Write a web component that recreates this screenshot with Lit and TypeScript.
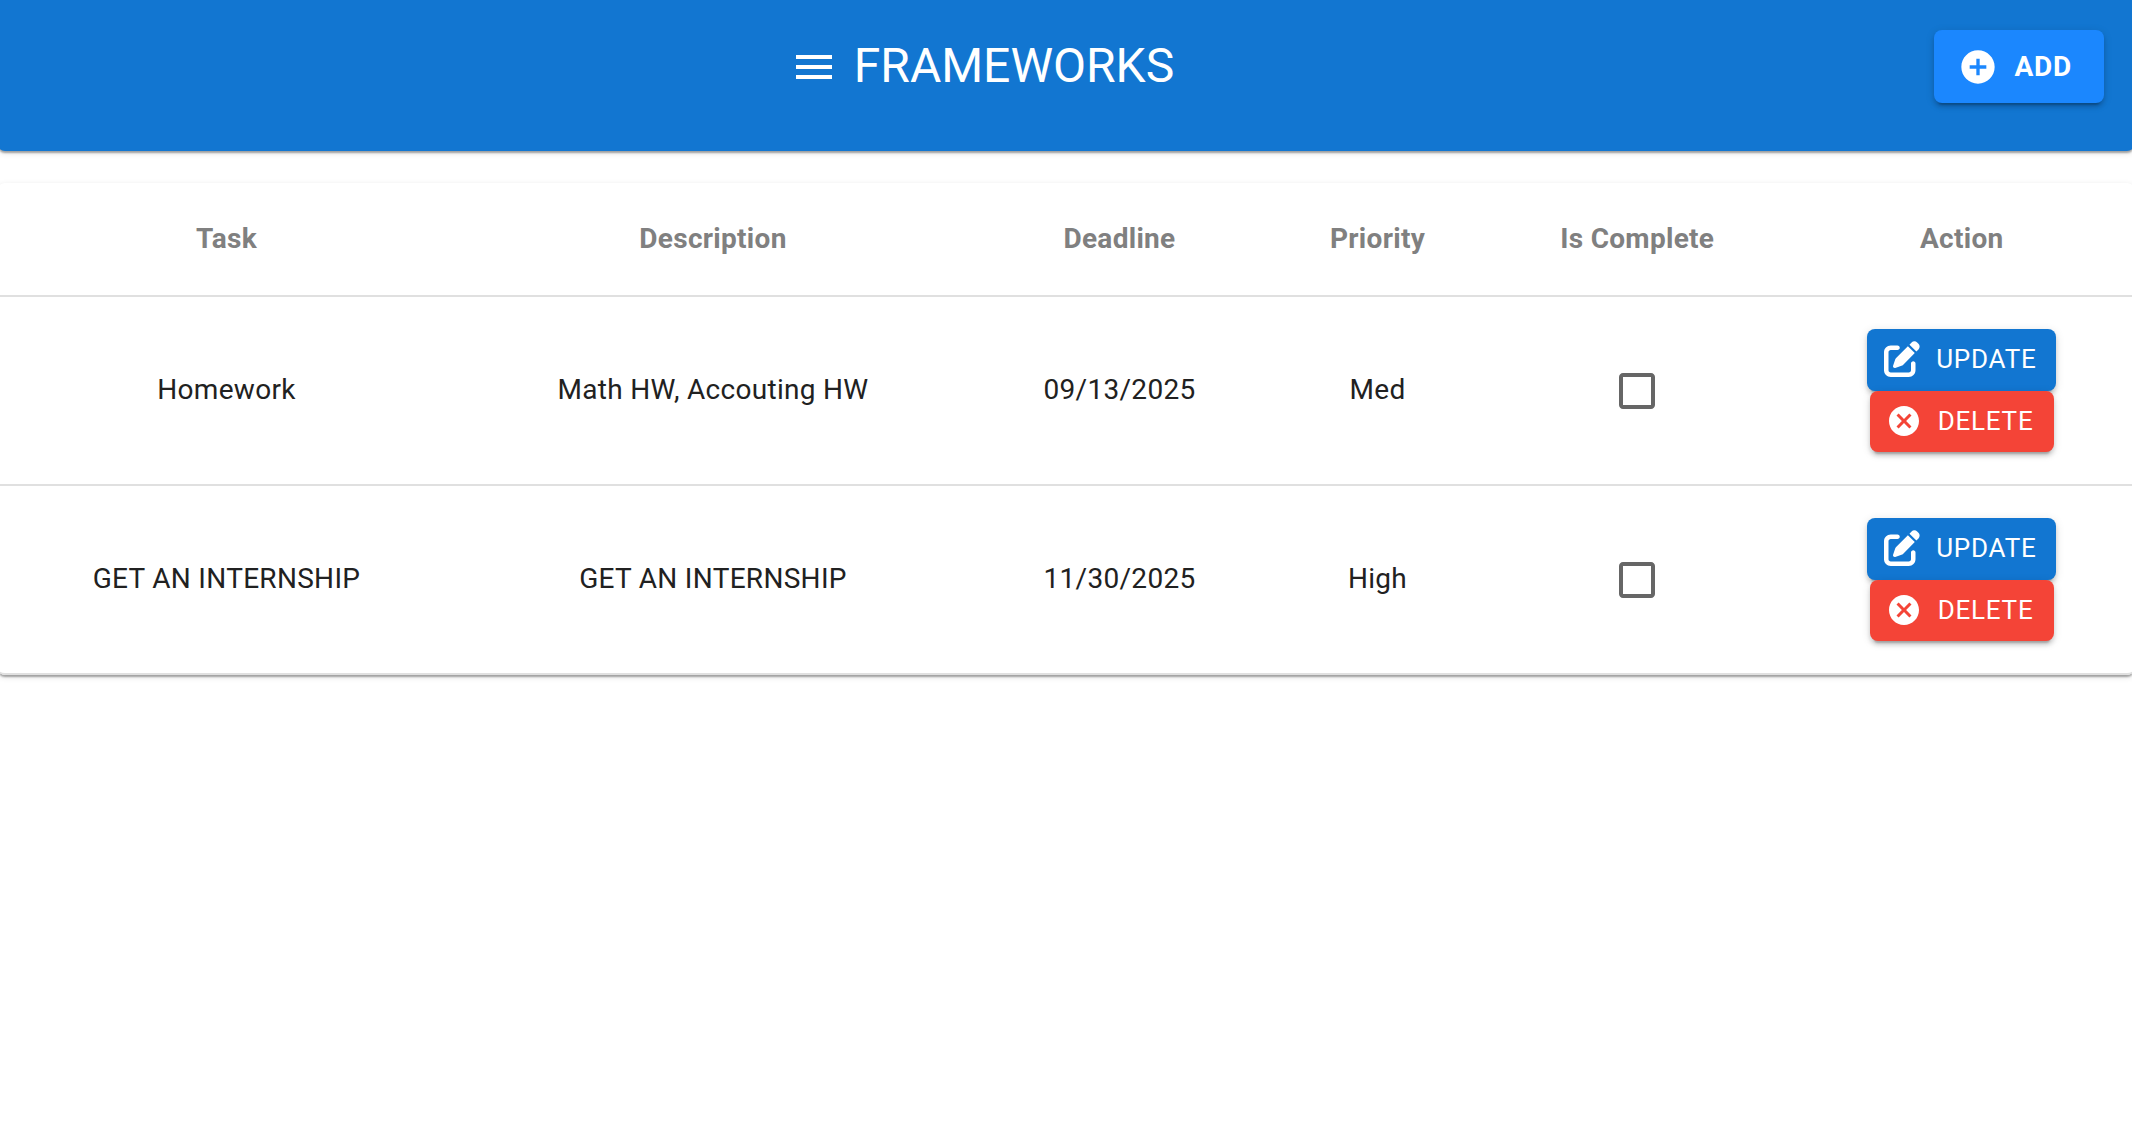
import { LitElement, html, css, svg } from "lit";
import { customElement, state } from "lit/decorators.js";

interface Task {
  title: string;
  description: string;
  deadline: string;
  priority: string;
  done: boolean;
}

const glyph = (d: string, size: number, box = 24) => svg`
  <svg width=${size} height=${size} viewBox="0 0 ${box} ${box}" fill="currentColor" aria-hidden="true"><path d=${d}></path></svg>`;

const MENU = "M3 18h18v-2H3v2zm0-5h18v-2H3v2zm0-7v2h18V6H3z";
const ADD = "M12 2C6.48 2 2 6.48 2 12s4.48 10 10 10 10-4.48 10-10S17.52 2 12 2zm5 11h-4v4h-2v-4H7v-2h4V7h2v4h4v2z";
const CANCEL = "M12 2C6.47 2 2 6.47 2 12s4.47 10 10 10 10-4.47 10-10S17.53 2 12 2zm5 13.59L15.59 17 12 13.41 8.41 17 7 15.59 10.59 12 7 8.41 8.41 7 12 10.59 15.59 7 17 8.41 13.41 12 17 15.59z";
const UNCHECKED = "M19 5v14H5V5h14m0-2H5c-1.1 0-2 .9-2 2v14c0 1.1.9 2 2 2h14c1.1 0 2-.9 2-2V5c0-1.1-.9-2-2-2z";
const CHECKED = "M19 3H5c-1.1 0-2 .9-2 2v14c0 1.1.9 2 2 2h14c1.1 0 2-.9 2-2V5c0-1.1-.9-2-2-2zm-9 14l-5-5 1.41-1.41L10 14.17l7.59-7.59L19 8l-9 9z";
const EDIT = "M471.6 21.7c-21.9-21.9-57.3-21.9-79.2 0L362.3 51.7l97.9 97.9 30.1-30.1c21.9-21.9 21.9-57.3 0-79.2L471.6 21.7zm-299.2 220c-6.1 6.1-10.8 13.6-13.5 21.9l-29.6 88.8c-2.9 8.6-.6 18.1 5.8 24.6s15.9 8.7 24.6 5.8l88.8-29.6c8.2-2.7 15.7-7.4 21.9-13.5L437.7 172.3 339.7 74.3 172.4 241.7zM96 64C43 64 0 107 0 160V416c0 53 43 96 96 96H352c53 0 96-43 96-96V320c0-17.7-14.3-32-32-32s-32 14.3-32 32v96c0 17.7-14.3 32-32 32H96c-17.7 0-32-14.3-32-32V160c0-17.7 14.3-32 32-32h96c17.7 0 32-14.3 32-32s-14.3-32-32-32H96z";

@customElement("app-root")
export class AppRoot extends LitElement {
  static styles = css`
    :host {
      display: block;
      min-height: 100vh;
      overflow: hidden;
      background: #fff;
      font-family: Roboto, "Liberation Sans", sans-serif;
      color: #212121;
    }
    * { box-sizing: border-box; }
    svg { display: block; flex: none; }
    button {
      display: flex;
      align-items: center;
      border: 0;
      margin: 0;
      border-radius: 8px;
      color: #fff;
      font: inherit;
      cursor: pointer;
      box-shadow: 0 6px 2px -4px rgba(0, 0, 0, 0.2), 0 4px 4px rgba(0, 0, 0, 0.14), 0 2px 10px rgba(0, 0, 0, 0.12);
    }
    .paper {
      margin: 0 -3px;
      border-radius: 8px;
      box-shadow: 0 4px 2px -2px rgba(0, 0, 0, 0.2), 0 2px 2px rgba(0, 0, 0, 0.14), 0 2px 6px rgba(0, 0, 0, 0.12);
    }
    .bar {
      display: flex;
      align-items: flex-start;
      height: 151px;
      padding: 30px 31px 0 33px;
      border-top-left-radius: 0;
      border-top-right-radius: 0;
      background: #1276d1;
      color: #fff;
    }
    .heading {
      flex: 1;
      display: flex;
      align-items: center;
      justify-content: center;
      gap: 16px;
      height: 74px;
    }
    .title { margin: 0; font-size: 48px; font-weight: 400; line-height: 64px; margin-top: -3px; }
    .add {
      width: 170px;
      height: 73px;
      padding: 0 0 0 24px;
      gap: 16.5px;
      background: #1b87fe;
      font-size: 28px;
      font-weight: 700;
      letter-spacing: 0.8px;
    }
    .sheet { margin-top: 32px; background: #fff; }
    .row {
      display: grid;
      grid-template-columns: 459px 514px 299px 217px 302.5px 1fr;
      align-items: center;
      justify-items: center;
      height: 189px;
      border-bottom: 2px solid #e0e0e0;
      font-size: 28px;
      line-height: 40px;
      letter-spacing: 0.3px;
    }
    .cell { padding-bottom: 2px; }
    .row:last-child { border-radius: 0 0 8px 8px; }
    .head { height: 114px; font-weight: 700; color: #808080; }
    .check { display: flex; color: #666; cursor: pointer; }
    .actions { display: flex; flex-direction: column; align-items: center; }
    .small {
      height: 61.5px;
      font-size: 26px;
      font-weight: 400;
      letter-spacing: 0.75px;
    }
    .update { width: 189px; padding: 0 0 1px 16.5px; gap: 16.5px; background: #1276d1; }
    .delete { width: 184px; padding: 0 0 0 16px; gap: 16px; background: #f44437; }
  `;

  @state() private tasks: Task[] = [
    { title: "Homework", description: "Math HW, Accouting HW", deadline: "09/13/2025", priority: "Med", done: false },
    { title: "GET AN INTERNSHIP", description: "GET AN INTERNSHIP", deadline: "11/30/2025", priority: "High", done: false },
  ];

  private toggle(index: number) {
    this.tasks = this.tasks.map((t, i) => (i === index ? { ...t, done: !t.done } : t));
  }

  private remove(index: number) {
    this.tasks = this.tasks.filter((_, i) => i !== index);
  }

  render() {
    return html`
      <header class="paper bar">
        <div class="heading">${glyph(MENU, 48)}<h1 class="title">FRAMEWORKS</h1></div>
        <button class="add">${glyph(ADD, 40)}<span>ADD</span></button>
      </header>
      <main class="paper sheet">
        <div class="row head">
          ${["Task", "Description", "Deadline", "Priority", "Is Complete", "Action"].map((h) => html`<span>${h}</span>`)}
        </div>
        ${this.tasks.map(
          (t, i) => html`
            <div class="row">
              <span class="cell">${t.title}</span>
              <span class="cell">${t.description}</span>
              <span class="cell">${t.deadline}</span>
              <span class="cell">${t.priority}</span>
              <span class="check" role="checkbox" aria-checked=${t.done} @click=${() => this.toggle(i)}>
                ${glyph(t.done ? CHECKED : UNCHECKED, 48)}
              </span>
              <div class="actions">
                ${t.done ? null : html`<button class="small update">${glyph(EDIT, 36, 512)}<span>UPDATE</span></button>`}
                <button class="small delete" @click=${() => this.remove(i)}>${glyph(CANCEL, 36)}<span>DELETE</span></button>
              </div>
            </div>
          `,
        )}
      </main>
    `;
  }
}
